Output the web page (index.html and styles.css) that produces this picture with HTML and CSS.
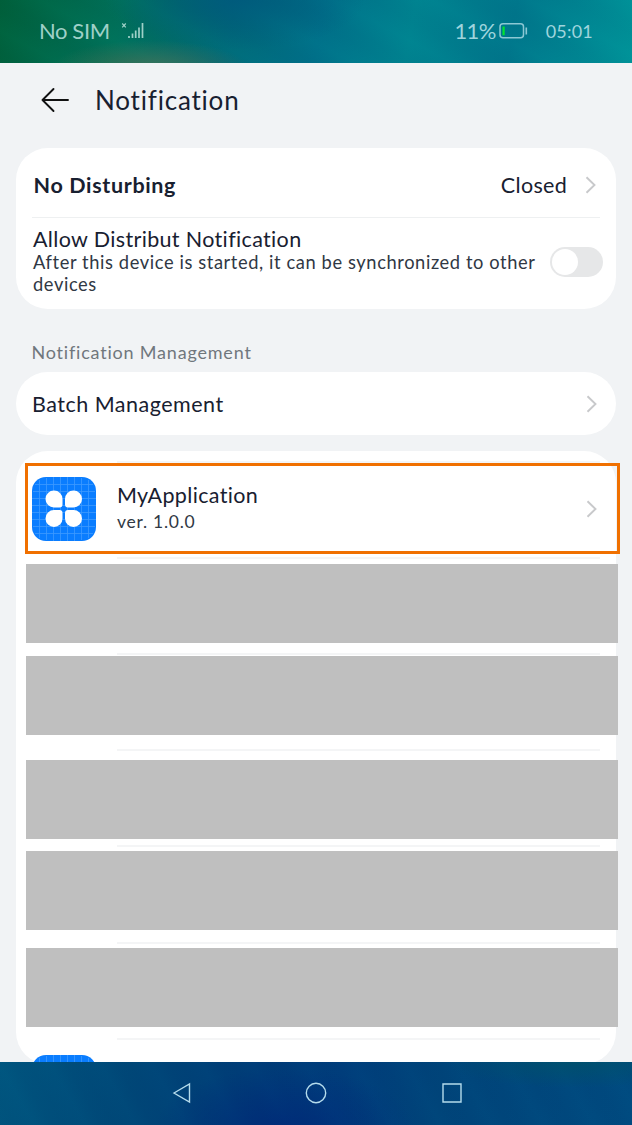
FILE: index.html
```html
<!DOCTYPE html>
<html lang="en">
<head>
<meta charset="utf-8">
<title>Notification</title>
<link rel="stylesheet" href="styles.css">
</head>
<body>
<div class="screen">
  <div class="status">
    <span class="sim">No SIM</span>
    <svg class="signal" width="24" height="18" viewBox="0 0 24 18" fill="none" stroke="currentColor">
      <path d="M1.200 1.500l3.600 3.800M4.800 1.500l-3.600 3.800" stroke-width="1.200"/>
      <path d="M8 16v-2M11.500 16v-4.500M14.700 16V8.500M18 16V5.500M21.500 16V1" stroke-width="1.700"/>
    </svg>
    <span class="percent">11%</span>
    <svg class="battery" width="29" height="16" viewBox="0 0 29 16" fill="none">
      <rect x="1" y=".8" width="23.500" height="14" rx="3" stroke="currentColor" stroke-width="1.500"/>
      <path d="M3.500 3.500h2.200v8.700H3.500z" fill="#00e52e"/>
      <path d="M27.300 4.500v7" stroke="currentColor" stroke-width="1.600"/>
    </svg>
    <span class="time">05:01</span>
  </div>

  <main class="content">
    <header class="header">
      <svg width="28" height="26" viewBox="0 0 28 26" fill="none" stroke="#111" stroke-width="1.900" stroke-linecap="round" stroke-linejoin="round">
        <path d="M12.500 2L1.500 13l11 11M1.500 13H27"/>
      </svg>
      <h1 class="title">Notification</h1>
    </header>

    <section class="card">
      <div class="row disturb">
        <span class="label strong">No Disturbing</span>
        <span class="value">Closed</span>
        <svg class="chevron" width="11" height="18" viewBox="0 0 11 18"><path d="M1.500 1.200L9.500 9l-8 7.800"/></svg>
      </div>
      <div class="row distribute">
        <div class="copy">
          <div class="label allow">Allow Distribut Notification</div>
          <div class="hint">After this device is started, it can be synchronized to other<br>devices</div>
        </div>
        <div class="switch"><div class="knob"></div></div>
      </div>
    </section>

    <h2 class="section-title">Notification Management</h2>

    <section class="card row batch">
      <span class="label batch-label">Batch Management</span>
      <svg class="chevron" width="11" height="18" viewBox="0 0 11 18"><path d="M1.500 1.200L9.500 9l-8 7.800"/></svg>
    </section>

    <section class="card apps">
      <div class="app-row first">
        <svg class="app-icon" width="64" height="64" viewBox="0 0 64 64">
          <defs>
            <g id="app">
              <rect width="64" height="64" rx="14" fill="#0a7dff"/>
              <path d="M7.500 3v58M14.500 1v62M21.500 0v64M28.500 0v64M35.500 0v64M42.500 0v64M49.500 1v62M56.500 3v58M3 7.500h58M1 14.500h62M0 21.500h64M0 28.500h64M0 35.500h64M0 42.500h64M1 49.500h62M3 56.500h58" stroke="#3d9bff" stroke-width=".8"/>
              <path d="M30.500 27.500a3 3 0 0 1-3 3H22a8.500 8.500 0 1 1 8.500-8.500zM33 27.500V22a8.500 8.500 0 1 1 8.500 8.500H36a3 3 0 0 1-3-3zM30.500 36v5.500A8.500 8.500 0 1 1 22 33h5.500a3 3 0 0 1 3 3zM36 33h5.500a8.500 8.500 0 1 1-8.500 8.500V36a3 3 0 0 1 3-3z" fill="#fff"/>
            </g>
          </defs>
          <use href="#app"/>
        </svg>
        <div class="copy">
          <div class="label app-name">MyApplication</div>
          <div class="version">ver. 1.0.0</div>
        </div>
        <svg class="chevron" width="11" height="18" viewBox="0 0 11 18"><path d="M1.500 1.200L9.500 9l-8 7.800"/></svg>
        <div class="highlight"></div>
      </div>
      <div class="app-row"><div class="mask m1"></div></div>
      <div class="app-row"><div class="mask m2"></div></div>
      <div class="app-row"><div class="mask m3"></div></div>
      <div class="app-row tall"><div class="mask m4"></div></div>
      <div class="app-row"><div class="mask m5"></div></div>
      <div class="app-row last">
        <svg class="app-icon" width="64" height="64" viewBox="0 0 64 64"><use href="#app"/></svg>
      </div>
    </section>
  </main>

  <nav class="navbar">
    <svg width="20" height="22" viewBox="0 0 20 22"><path d="M2 11L17.500 2v18z"/></svg>
    <svg width="22" height="22" viewBox="0 0 22 22"><circle cx="11" cy="11" r="9.700"/></svg>
    <svg width="22" height="22" viewBox="0 0 22 22"><path d="M2 2h18v18H2z"/></svg>
  </nav>
</div>
</body>
</html>
```
FILE: styles.css
```css
* { box-sizing: border-box; }
body { margin: 0; }
svg { display: block; flex: none; }
.screen {
  width: 632px; height: 1125px; overflow: hidden;
  display: flex; flex-direction: column;
  font-family: Lato, "Open Sans", sans-serif;
  color: #182030; white-space: nowrap;
  font-variant-ligatures: none;
}
.status {
  height: 63px; flex: none; display: flex; align-items: center;
  padding: 0 39px 2px;
  color: #9fd0c8; font-size: 22px;
  background:
    radial-gradient(ellipse 100px 30px at 150px 70px, rgba(85,115,85,.75), transparent),
    radial-gradient(ellipse 130px 50px at 235px 0, rgba(0,85,125,.75), transparent),
    repeating-linear-gradient(28deg, rgba(0,60,100,.03) 0 10px, rgba(0,175,175,.04) 28px, rgba(0,60,100,.03) 46px),
    linear-gradient(100deg, #006039 0, #007058 120px, #006a78 230px, #007089 320px, #008390 410px, #00768b 510px, #009298 632px);
}
.sim { letter-spacing: -.4px; }
.signal { margin-left: 11px; }
.percent { margin-left: auto; letter-spacing: -.6px; color: #9fd5dd; }
.battery { margin-left: 3px; color: #8cc8d4; }
.time { margin-left: 18px; font-size: 18px; letter-spacing: .2px; color: #9fd5dd; }
.content { height: 999px; flex: none; overflow: hidden; background: #f1f3f5; padding: 0 16px; }
.header { height: 85px; padding: 0 0 11px 25px; display: flex; align-items: center; gap: 26px; }
.title { margin: 0; font-size: 26px; font-weight: 400; line-height: 32px; letter-spacing: .8px; }
.card { background: #fff; border-radius: 32px; }
.row { display: flex; align-items: center; }
.label { font-size: 21.5px; line-height: 26px; }
.strong { font-weight: 700; letter-spacing: .65px; }
.disturb { height: 70px; margin: 0 16px; padding: 5px 4px 0 1.5px; border-bottom: 1px solid #eef0f1; }
.value { margin-left: auto; font-size: 21.5px; letter-spacing: .3px; }
.disturb .chevron { margin-left: 18px; }
.chevron { fill: none; stroke: #c8c9cb; stroke-width: 1.9; }
.distribute { height: 91px; padding: 0 13px 0 17px; justify-content: space-between; }
.distribute .copy { padding-bottom: 7px; }
.allow { letter-spacing: .35px; }
.hint { font-size: 18.3px; line-height: 22px; color: #303844; letter-spacing: .6px; margin-top: -1px; }
.switch { width: 53px; height: 30px; border-radius: 15px; background: #e6e7e8; padding: 2px; margin-top: -4px; }
.knob { width: 26px; height: 26px; border-radius: 50%; background: #fff; }
.section-title { margin: 30px 0 7px 15.5px; font-size: 18px; line-height: 26px; font-weight: 400; color: #70777d; letter-spacing: .8px; }
.batch { height: 63px; padding: 0 19px 0 16px; justify-content: space-between; }
.batch-label { letter-spacing: .5px; }
.apps { height: 613px; margin-top: 16px; padding-top: 10px; }
.app-row { height: 96px; display: flow-root; background: linear-gradient(#f4f5f6, #f4f5f6) 101px 0 / 483px 2px no-repeat; }
.tall { height: 97px; }
.first, .last { display: flex; align-items: center; position: relative; padding: 0 19px 0 16px; }
.first .copy { margin-left: 21px; }
.first .chevron { margin-left: auto; }
.last { height: 25px; align-items: flex-start; padding-top: 17px; }
.app-name { letter-spacing: .35px; }
.version { font-size: 17.5px; line-height: 28px; color: #303844; letter-spacing: .75px; }
.highlight { position: absolute; left: 9px; top: 2px; width: 595px; height: 91px; border: 3px solid #f07000; }
.mask { width: 592px; height: 79px; margin-left: 10px; background: #bfbfbf; }
.m1 { margin-top: 7px; }
.m2 { margin-top: 3px; }
.m3 { margin-top: 11px; }
.m4 { margin-top: 6px; }
.m5 { margin-top: 6px; }
.navbar {
  flex: 1; display: flex; align-items: center; justify-content: center; gap: 113.5px;
  padding: 0 0 1px 2px;
  fill: none; stroke: #b4dcec; stroke-width: 1.4;
  background:
    radial-gradient(ellipse 130px 26px at 575px 0, rgba(0,85,100,.6), transparent),
    radial-gradient(ellipse 130px 60px at 285px 66px, rgba(0,35,120,.65), transparent),
    repeating-linear-gradient(60deg, rgba(0,30,90,.04) 0 12px, rgba(0,100,150,.03) 30px, rgba(0,30,90,.04) 44px),
    linear-gradient(95deg, #00567f 0, #004878 130px, #003c78 260px, #003e7c 340px, #00457a 440px, #004b80 632px);
}
```
